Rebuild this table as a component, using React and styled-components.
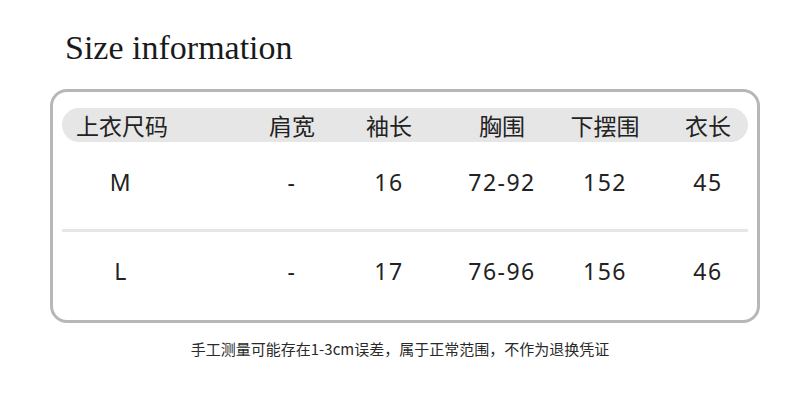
import React from "react";
import styled, { createGlobalStyle } from "styled-components";

const Global = createGlobalStyle`
  body {
    margin: 0;
    background: #fff;
  }
`;

const Page = styled.div`
  width: 800px;
  height: 400px;
  box-sizing: border-box;
  padding: 26px 40px 0 50px;
  font-family: "Noto Sans", "Noto Sans CJK SC", sans-serif;
  color: #1e1e1e;
`;

const Title = styled.h1`
  margin: 0 0 0 15px;
  font-family: "Liberation Serif", serif;
  font-weight: normal;
  font-size: 34px;
  line-height: 44px;
  color: #1a1a1a;
`;

const Card = styled.div`
  margin-top: 19px;
  width: 710px;
  box-sizing: border-box;
  border: 3px solid #b7b7b7;
  border-radius: 17px;
  padding: 16px 9px 10px;
`;

const Row = styled.div`
  display: grid;
  grid-template-columns: 14px 90px 81px 90px 7px 90px 23px 90px 13px 90px 13px 90px;
  align-items: center;
  height: ${p => p.$h}px;
`;

const Header = styled(Row)`
  background: #e6e6e6;
  border-radius: 17px;
  font-family: "Noto Sans CJK SC", sans-serif;
`;

const Cell = styled.div`
  grid-column: ${p => p.$i * 2 + 2};
  text-align: center;
  white-space: nowrap;
  font-size: 23px;
  letter-spacing: 1.5px;
  color: #222;
`;

const HeadCell = styled(Cell)`
  font-size: 23px;
  letter-spacing: 0;
`;

const Divider = styled.div`
  height: 3px;
  background: #e6e6e6;
  margin-top: 7px;
`;

const Note = styled.p`
  margin: 15px 0 0;
  width: 700px;
  text-align: center;
  font-family: "Noto Sans CJK SC", sans-serif;
  font-size: 15px;
  color: #2a2a2a;
`;

const heads = ["上衣尺码", "肩宽", "袖长", "胸围", "下摆围", "衣长"];
const rows = [
  ["M", "-", "16", "72-92", "152", "45"],
  ["L", "-", "17", "76-96", "156", "46"],
];

export default function App() {
  return (
    <Page>
      <Global />
      <Title>Size information</Title>
      <Card>
        <Header $h={34}>
          {heads.map((h, i) => (
            <HeadCell key={h} $i={i}>{h}</HeadCell>
          ))}
        </Header>
        <Row $h={80}>
          {rows[0].map((v, i) => (
            <Cell key={i} $i={i}>{v}</Cell>
          ))}
        </Row>
        <Divider />
        <Row $h={78}>
          {rows[1].map((v, i) => (
            <Cell key={i} $i={i}>{v}</Cell>
          ))}
        </Row>
      </Card>
      <Note>手工测量可能存在1-3cm误差，属于正常范围，不作为退换凭证</Note>
    </Page>
  );
}
